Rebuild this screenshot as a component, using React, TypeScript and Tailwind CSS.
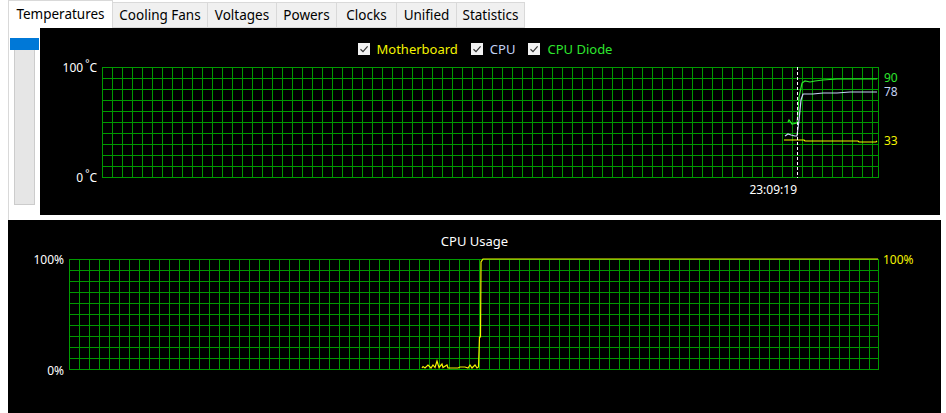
import React from 'react';

const GRID = '#009a00';
const GREEN = '#2ee62e';
const CPU_BLUE = '#c4d2f4';
const YELLOW = '#f4f400';

const tabs = [
  { label: 'Temperatures', w: 'w-[105px]', active: true },
  { label: 'Cooling Fans', w: 'w-[95px]' },
  { label: 'Voltages', w: 'w-[69px]' },
  { label: 'Powers', w: 'w-[60px]' },
  { label: 'Clocks', w: 'w-[60px]' },
  { label: 'Unified', w: 'w-[60px]' },
  { label: 'Statistics', w: 'w-[68px]' },
];

// points are written in page coordinates, the svg groups shift them back
const tempDiode: [number, number][] = [
  [788, 122], [789, 120], [792, 124], [797, 123], [798, 113], [799, 97], [802, 83], [805, 81],
  [810, 82], [815, 81], [823, 80], [837, 79], [850, 79], [863, 79], [877, 79],
];
const tempCpu: [number, number][] = [
  [785, 136], [788, 134], [791, 135], [795, 136], [797, 136], [799, 120], [801, 100], [803, 94],
  [807, 94], [813, 94], [823, 93], [837, 93], [850, 92], [863, 92], [877, 92],
];
const tempBoard: [number, number][] = [
  [784, 140], [804, 140], [805, 141], [858, 141], [859, 142], [876, 142], [877, 141],
];
const cpuUsage: [number, number][] = [
  [422, 368], [423, 366.5], [425, 368], [428, 365], [431, 368], [433, 365], [435, 367.5],
  [437, 361], [439, 367.5], [442, 364], [443, 367.5], [447, 365], [448, 368], [458, 368],
  [460, 367], [465, 367], [468, 368], [470, 365], [472, 368], [475, 365], [477, 368],
  [478.5, 367], [479.5, 337], [480.5, 337], [481, 262], [483, 259], [878, 259],
];

const pts = (p: [number, number][]) => p.map(([x, y]) => `${x},${y}`).join(' ');

function Grid({ left, top, right }: { left: number; top: number; right: number }) {
  const lines: React.ReactNode[] = [];
  for (let i = 0; i <= 10; i++) {
    const y = top + i * 11 + 0.5;
    lines.push(<line key={'h' + i} x1={left} x2={right + 1} y1={y} y2={y} />);
  }
  for (let x = left; x < right - 2; x += 10) {
    lines.push(<line key={'v' + x} x1={x + 0.5} x2={x + 0.5} y1={top} y2={top + 111} />);
  }
  lines.push(<line key="vr" x1={right + 0.5} x2={right + 0.5} y1={top} y2={top + 111} />);
  return (
    <g stroke={GRID} strokeWidth={1} shapeRendering="crispEdges">
      {lines}
    </g>
  );
}

function Check({ color, label }: { color: string; label: string }) {
  return (
    <div className="flex items-center gap-[7px]">
      <div className="w-[12px] h-[12px] bg-[#f2f2f2] flex items-center justify-center">
        <svg width="10" height="10" viewBox="0 0 10 10">
          <path d="M1.5 5.2 L4 7.6 L8.6 2.4" fill="none" stroke="#333" strokeWidth="1.2" />
        </svg>
      </div>
      <span className="text-[13px] leading-none" style={{ color }}>
        {label}
      </span>
    </div>
  );
}

export default function App() {
  return (
    <div className="w-[946px] h-[413px] bg-white overflow-hidden flex flex-col font-['Noto_Sans',sans-serif]">
      <div className="h-[28px] flex items-end pl-[8px]">
        {tabs.map((t) =>
          t.active ? (
            <div
              key={t.label}
              className={`${t.w} h-[28px] bg-white border-l border-t border-r border-[#d9d9d9] flex items-center justify-center text-[13.5px] text-black pb-[1px]`}
            >
              {t.label}
            </div>
          ) : (
            <div
              key={t.label}
              className={`${t.w} h-[26px] bg-[#f0f0f0] border-t border-r border-b border-[#d9d9d9] flex items-center justify-center text-[13.5px] text-black`}
            >
              {t.label}
            </div>
          )
        )}
      </div>

      <div className="flex h-[187px] pl-[8px]">
        <div className="w-[32px] border-l border-[#d9d9d9] pl-[1px] pt-[10px] flex flex-col">
          <div className="w-[29px] h-[12px] bg-[#0078d7]" />
          <div className="ml-[4px] w-[21px] h-[155px] bg-[#e6e6e6] border border-t-0 border-[#cccccc]" />
        </div>
        <div className="w-[900px] h-[187px] bg-black flex flex-col">
          <div className="h-[28px] pt-[14px] flex items-center justify-center gap-[13px] pr-[10px]">
            <Check color={YELLOW} label="Motherboard" />
            <Check color={CPU_BLUE} label="CPU" />
            <Check color={GREEN} label="CPU Diode" />
          </div>
          <svg width="900" height="159" className="block">
            <g transform="translate(-40,-56)" fontFamily="Noto Sans, sans-serif" fontSize="12">
              <Grid left={102} top={67} right={878} />
              <polyline points={pts(tempBoard)} fill="none" stroke={YELLOW} strokeWidth="1.2" />
              <polyline points={pts(tempCpu)} fill="none" stroke={CPU_BLUE} strokeWidth="1.2" />
              <polyline points={pts(tempDiode)} fill="none" stroke={GREEN} strokeWidth="1.2" />
              <line x1="797.5" x2="797.5" y1="67" y2="178" stroke="#fff" strokeWidth="1" strokeDasharray="3 2" />
              <text x="97" y="69" fill="#fff" textAnchor="end" dominantBaseline="middle">
                100<tspan fontSize="10" dy="-5" dx="2">°</tspan>
                <tspan dy="5">C</tspan>
              </text>
              <text x="97" y="179" fill="#fff" textAnchor="end" dominantBaseline="middle">
                0<tspan fontSize="10" dy="-5" dx="2">°</tspan>
                <tspan dy="5">C</tspan>
              </text>
              <text x="797" y="191" fill="#fff" textAnchor="end" dominantBaseline="middle">
                23:09:19
              </text>
              <text x="884" y="79" fill={GREEN} dominantBaseline="middle">90</text>
              <text x="884" y="93" fill={CPU_BLUE} dominantBaseline="middle">78</text>
              <text x="884" y="142" fill={YELLOW} dominantBaseline="middle">33</text>
            </g>
          </svg>
        </div>
      </div>

      <div className="h-[5px] ml-[8px] w-[1px] bg-[#d9d9d9]" />

      <div className="ml-[8px] w-[933px] h-[193px] bg-black flex flex-col">
        <div className="h-[28px] pt-[14px] flex items-center justify-center">
          <span className="text-[13px] text-white leading-none">CPU Usage</span>
        </div>
        <svg width="933" height="165" className="block">
          <g transform="translate(-8,-248)" fontFamily="Noto Sans, sans-serif" fontSize="12">
            <Grid left={69} top={259} right={878} />
            <polyline points={pts(cpuUsage)} fill="none" stroke={YELLOW} strokeWidth="1.2" />
            <text x="64" y="261" fill="#fff" textAnchor="end" dominantBaseline="middle">100%</text>
            <text x="64" y="372" fill="#fff" textAnchor="end" dominantBaseline="middle">0%</text>
            <text x="883" y="261" fill={YELLOW} dominantBaseline="middle">100%</text>
          </g>
        </svg>
      </div>
    </div>
  );
}
